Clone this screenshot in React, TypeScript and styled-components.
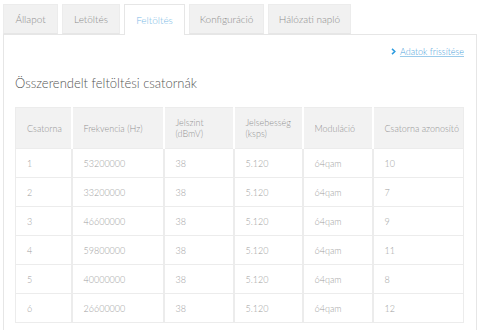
import styled, { createGlobalStyle } from "styled-components";

const GlobalStyle = createGlobalStyle`
  body {
    margin: 0;
    background: #ffffff;
    font-family: Lato, "Open Sans", "Liberation Sans", sans-serif;
  }
`;

const tabs = ["Állapot", "Letöltés", "Feltöltés", "Konfiguráció", "Hálózati napló"];
const tabWidths = [55, 58, 61, 75, 83];

const columns = [
  { label: "Csatorna", width: 56, nowrap: true },
  { label: "Frekvencia (Hz)", width: 92, nowrap: true },
  { label: "Jelszint (dBmV)", width: 70, nowrap: false },
  { label: "Jelsebesség (ksps)", width: 69, nowrap: false },
  { label: "Moduláció", width: 70, nowrap: true },
  { label: "Csatorna azonosító", width: 91, nowrap: true },
];

const rows = [
  ["1", "53200000", "38", "5.120", "64qam", "10"],
  ["2", "33200000", "38", "5.120", "64qam", "7"],
  ["3", "46600000", "38", "5.120", "64qam", "9"],
  ["4", "59800000", "38", "5.120", "64qam", "11"],
  ["5", "40000000", "38", "5.120", "64qam", "8"],
  ["6", "26600000", "38", "5.120", "64qam", "12"],
];

export default function App() {
  return (
    <Page>
      <GlobalStyle />
      <TabBar>
        {tabs.map((t, i) => (
          <Tab key={t} $active={i === 2} $width={tabWidths[i]}>
            {t}
          </Tab>
        ))}
      </TabBar>
      <Panel>
        <LinkRow>
          <RefreshLink href="#">
            <Chevron viewBox="0 0 6 8">
              <path d="M1.2 0.8 L4.6 4 L1.2 7.2" />
            </Chevron>
            Adatok frissítése
          </RefreshLink>
        </LinkRow>
        <Title>Összerendelt feltöltési csatornák</Title>
        <Table>
          <colgroup>
            {columns.map((c) => (
              <col key={c.label} style={{ width: c.width }} />
            ))}
          </colgroup>
          <thead>
            <tr>
              {columns.map((c) => (
                <HeadCell key={c.label} $nowrap={c.nowrap}>
                  {c.label}
                </HeadCell>
              ))}
            </tr>
          </thead>
          <tbody>
            {rows.map((r) => (
              <tr key={r[0]}>
                {r.map((v, i) => (
                  <Cell key={i}>{v}</Cell>
                ))}
              </tr>
            ))}
          </tbody>
        </Table>
      </Panel>
    </Page>
  );
}

const Page = styled.div`
  width: 480px;
  height: 330px;
  overflow: hidden;
  padding: 4px 3px 0;
  box-sizing: border-box;
`;

const TabBar = styled.div`
  display: flex;
  gap: 4px;
  height: 30px;
  position: relative;
  z-index: 1;
`;

const Tab = styled.div<{ $active: boolean; $width: number }>`
  width: ${(p) => p.$width}px;
  height: ${(p) => (p.$active ? 31 : 30)}px;
  box-sizing: border-box;
  display: flex;
  align-items: center;
  justify-content: center;
  font-size: 10px;
  font-weight: 300;
  color: ${(p) => (p.$active ? "#7dbbe6" : "#8c8c8c")};
  background: ${(p) => (p.$active ? "#ffffff" : "#f1f1f1")};
  border: 1px solid ${(p) => (p.$active ? "#e6e6e6" : "#ececec")};
  border-bottom: ${(p) => (p.$active ? "none" : "1px solid #e6e6e6")};
  white-space: nowrap;
`;

const Panel = styled.div`
  border: 1px solid #e6e6e6;
  height: 320px;
  box-sizing: border-box;
  padding: 0 12px 0 11px;
`;

const LinkRow = styled.div`
  display: flex;
  justify-content: flex-end;
  padding-top: 10px;
  height: 22px;
  box-sizing: border-box;
`;

const RefreshLink = styled.a`
  display: flex;
  align-items: center;
  gap: 4px;
  font-size: 9px;
  font-weight: 300;
  color: #4ea3db;
  text-decoration: underline;
  text-decoration-color: #9ccbea;
`;

const Chevron = styled.svg`
  width: 5px;
  height: 7px;
  fill: none;
  stroke: #2a9be0;
  stroke-width: 1.8;
`;

const Title = styled.div`
  margin-top: 18px;
  font-size: 13px;
  font-weight: 300;
  color: #555555;
  line-height: 16px;
`;

const Table = styled.table`
  margin-top: 16px;
  width: 448px;
  border-collapse: collapse;
  table-layout: fixed;
  border: 1px solid #ececec;
`;

const HeadCell = styled.th<{ $nowrap: boolean }>`
  height: 40px;
  background: #f2f2f2;
  border-left: 2px solid #ffffff;
  padding: 0 11px;
  text-align: left;
  font-size: 9px;
  font-weight: 300;
  color: #939393;
  line-height: 11px;
  white-space: ${(p) => (p.$nowrap ? "nowrap" : "normal")};
  &:first-child {
    border-left: none;
  }
`;

const Cell = styled.td`
  height: 29px;
  box-sizing: border-box;
  border: 1px solid #ececec;
  border-left-width: 2px;
  padding: 0 11px;
  font-size: 9px;
  font-weight: 300;
  color: #a0a0a0;
  &:first-child {
    border-left-width: 1px;
  }
`;
